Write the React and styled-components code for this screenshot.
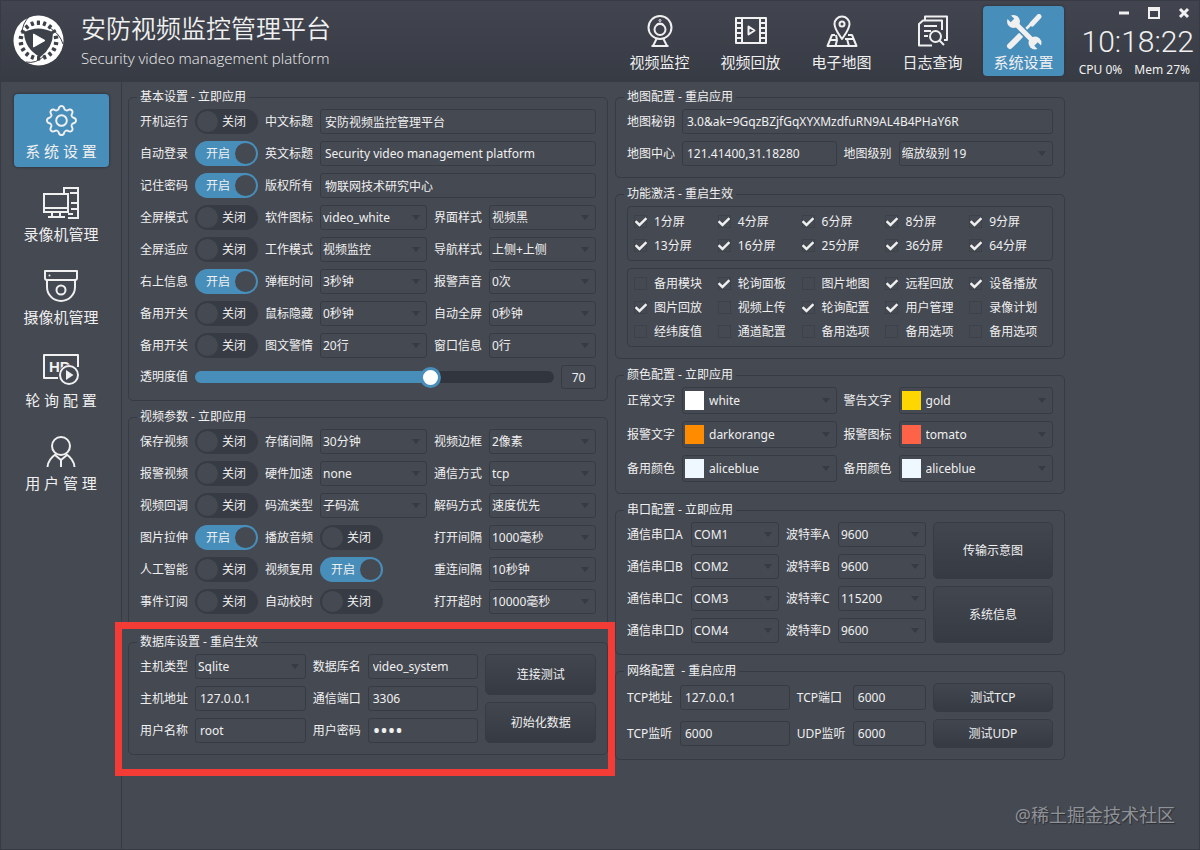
import React, { useId, useState } from "react";
import styled, { createGlobalStyle } from "styled-components";
import { BsGear } from "react-icons/bs";
import { FaCheck } from "react-icons/fa";

const colors = {
  panel: "#454952",
  border: "#373b44",
  dark: "#373b44",
  text: "#f0f0f0",
  blue: "#488eba",
  red: "#f43c36",
};

const GlobalStyle = createGlobalStyle`
  * { box-sizing: border-box; }
  body {
    margin: 0;
    background: ${colors.panel};
    color: ${colors.text};
    font-family: "Noto Sans", "Noto Sans CJK SC", sans-serif;
    font-size: 12px;
    line-height: 16px;
  }
  button, input, select { font: inherit; color: inherit; }
`;

const Window = styled.div`
  min-height: 100vh;
  display: flex;
  flex-direction: column;
  border: 1px solid ${colors.border};
  position: relative;
`;

const Header = styled.header`
  height: 81px;
  display: flex;
  align-items: center;
  padding: 0 5px 2px 12px;
  background: linear-gradient(#42454f, #373b44);
`;

const Brand = styled.div`
  flex: 1;
  display: flex;
  align-items: center;
  gap: 17px;
`;

const Title = styled.h1`
  margin: 0;
  font-size: 25px;
  line-height: 34px;
  font-weight: 350;
`;

const SubTitle = styled.p`
  margin: 0;
  font-family: "Open Sans", "Noto Sans", sans-serif;
  font-weight: 300;
  font-size: 15px;
  line-height: 26px;
`;

const TopNav = styled.nav`
  display: flex;
  gap: 10px;
`;

const NavButton = styled.button`
  display: flex;
  flex-direction: column;
  align-items: center;
  gap: 4px;
  border: none;
  border-radius: 4px;
  background: ${({ $active }) => ($active ? colors.blue : "transparent")};
  box-shadow: ${({ $active }) => ($active ? "0 0 2px 1px #343841" : "none")};
  font-size: 15px;
  line-height: 20px;
  cursor: pointer;
`;

const IconSlot = styled.span`
  height: 34px;
  display: grid;
  place-items: center;
`;

const TopButton = styled(NavButton)`
  width: 81px;
  height: 70px;
  padding: 8px 0 0;
`;

const SideButton = styled(NavButton)`
  width: 95px;
  height: 73px;
  padding: 9px 0 0;
`;

const Status = styled.div`
  width: 119px;
  margin-left: 11px;
  height: 79px;
  display: flex;
  flex-direction: column;
`;

const WindowButtons = styled.div`
  display: flex;
  justify-content: flex-end;
  gap: 10px;
  height: 24px;
`;

const WindowButton = styled.button`
  width: 20px;
  padding: 0;
  border: none;
  background: none;
  display: grid;
  place-items: center;
`;

const Clock = styled.time`
  height: 34px;
  font-family: Roboto, sans-serif;
  font-weight: 300;
  font-size: 30px;
  line-height: 34px;
  text-align: right;
`;

const Usage = styled.div`
  display: flex;
  justify-content: flex-end;
  gap: 12px;
  padding: 3px 4px 0 0;
`;

const Body = styled.div`
  flex: 1;
  display: flex;
`;

const Sidebar = styled.nav`
  width: 121px;
  display: flex;
  flex-direction: column;
  align-items: center;
  gap: 10px;
  padding-top: 12px;
  border-right: 1px solid ${colors.border};
`;

const Main = styled.main`
  flex: 1;
  padding: 7px 6px;
`;

const Panels = styled.div`
  display: grid;
  grid-template-columns: 480fr 450fr;
  gap: 7px;
  max-width: 937px;
`;

const PanelColumn = styled.div`
  display: flex;
  flex-direction: column;
  gap: 8px;
`;

const GroupBox = styled.fieldset`
  margin: 0;
  min-width: 0;
  padding: 4px 8px 11px;
  border: 1px solid ${colors.border};
  border-radius: 5px;
`;

const Legend = styled.legend`
  padding: 0 3px;
  white-space: pre;
`;

const GroupBody = styled.div`
  margin: 0 3px;
  display: flex;
  flex-direction: column;
  gap: 7px;
`;

const FormGrid = styled.div`
  display: grid;
  grid-template-columns: ${({ $columns }) => $columns};
  grid-auto-rows: ${({ $row }) => $row || 25}px;
  align-items: center;
  gap: 7px;
`;

const Label = styled.label`
  white-space: nowrap;
`;

const TextInput = styled.input`
  width: 100%;
  min-width: 0;
  height: 25px;
  padding: 0 4px;
  border: 1px solid ${colors.border};
  border-radius: 3px;
  background: transparent;
  outline: none;
  grid-column: span ${({ $span }) => $span || 1};

  &[type="password"] { font-size: 20px; }
`;

const NumberBox = styled(TextInput)`
  height: 24px;
  padding: 0;
  text-align: center;
`;

const ComboBox = styled.div`
  position: relative;
  min-width: 0;
  height: ${({ $tall }) => ($tall ? 27 : 25)}px;
  display: flex;
  align-items: center;
  border: 1px solid ${colors.border};
  border-radius: 3px;

  &::after {
    content: "";
    position: absolute;
    right: 6px;
    border: 4px solid transparent;
    border-top: 5px solid ${colors.dark};
    border-bottom: none;
    pointer-events: none;
  }
`;

const Select = styled.select`
  flex: 1;
  min-width: 0;
  height: 100%;
  padding: 0 2px;
  border: none;
  background: transparent;
  appearance: none;
  outline: none;
`;

const Swatch = styled.span`
  width: 19px;
  height: 19px;
  margin: 0 3px 0 2px;
  background: ${({ $color }) => $color};
`;

const SwitchTrack = styled.label`
  width: 63px;
  height: 25px;
  padding: 2px;
  display: flex;
  flex-direction: ${({ $on }) => ($on ? "row-reverse" : "row")};
  align-items: center;
  border-radius: 13px;
  background: ${({ $on }) => ($on ? colors.blue : colors.dark)};
`;

const SwitchKnob = styled.input`
  appearance: none;
  width: 21px;
  height: 21px;
  margin: 0;
  border-radius: 50%;
  background: ${colors.panel};
`;

const SwitchText = styled.span`
  padding: 0 5px 0 4px;
`;

const RangeInput = styled.input`
  appearance: none;
  width: 100%;
  height: 12px;
  margin: 0;
  border-radius: 6px;
  background: linear-gradient(
    to right,
    ${colors.blue} ${({ $fill }) => $fill}%,
    #31353e ${({ $fill }) => $fill}%
  );

  &::-webkit-slider-thumb {
    appearance: none;
    width: 21px;
    height: 21px;
    border-radius: 50%;
    border: 3px solid ${colors.blue};
    background: #ffffff;
  }
`;

const CheckPanel = styled.div`
  display: grid;
  grid-template-columns: repeat(5, 1fr);
  gap: 7px;
  padding: 6px;
  border: 1px solid ${colors.border};
  border-radius: 4px;
`;

const CheckLabel = styled.label`
  display: flex;
  align-items: center;
  gap: 7px;
  height: 17px;
  white-space: nowrap;
`;

const CheckMark = styled.span`
  width: 13px;
  display: grid;
  place-items: center;

  > * { grid-area: 1 / 1; }
  svg { pointer-events: none; }
`;

const CheckInput = styled.input`
  appearance: none;
  width: 13px;
  height: 13px;
  margin: 0;
  border: 1px solid #3d414a;
`;

const PushButton = styled.button`
  width: 100%;
  height: 100%;
  padding: 0;
  background: linear-gradient(#42464f, #363a43);
  border: 1px solid ${colors.border};
  border-radius: 5px;
`;

const ButtonStack = styled.div`
  grid-column: 5;
  grid-row: 1 / span ${({ $rows }) => $rows};
  height: 100%;
  display: grid;
  grid-auto-rows: 1fr;
  gap: 7px;
`;

const Marked = styled.div`
  position: relative;

  &::after {
    content: "";
    position: absolute;
    inset: -12px -7px -21px -13px;
    border: 7px solid ${colors.red};
    pointer-events: none;
    z-index: 2;
  }
`;

const Watermark = styled.div`
  position: absolute;
  right: 24px;
  bottom: 21px;
  font-size: 18px;
  line-height: 26px;
  color: #8f9297;
  text-shadow: 1px 1px 1px #2b2e35;
`;

/* icons */

const Icon = ({ width = 32, height = 32, children }) => (
  <svg width={width} height={height} viewBox={`0 0 ${width} ${height}`} fill="none"
    stroke="#f0f0f0" strokeWidth="2" strokeLinejoin="round" aria-hidden="true">
    {children}
  </svg>
);

const Logo = () => {
  const holes = Array.from({ length: 18 }, (_, i) => i * 20);
  return (
    <svg width="51" height="51" viewBox="0 0 51 51" aria-hidden="true">
      <circle cx="25.5" cy="25.5" r="25" fill="#ffffff" />
      {holes.map((angle) => (
        <rect key={angle} x="23.8" y="5.5" width="3.2" height="4.4" rx="0.6" fill="#3d414a"
          transform={`rotate(${angle} 25.5 25.5)`} />
      ))}
      <path d="M12 18 Q25 11 39 18 Q39 32 27 41 Q13 33 12 18Z" fill="#3d414a"
        stroke="#3d414a" strokeWidth="2" strokeLinejoin="round" />
      <path d="M9 19 Q9 8 17 1 M37 13 Q47 19 50 29 M31 41 Q23 49 13 47" fill="none"
        stroke="#3d414a" strokeWidth="1" />
      <path d="M20.500 19 L32 25.500 L20.500 32Z" fill="#ffffff" stroke="#ffffff" strokeLinejoin="round" />
    </svg>
  );
};

const WebcamIcon = () => (
  <Icon>
    <circle cx="16" cy="12.500" r="11.500" />
    <circle cx="16" cy="14.500" r="5.500" />
    <path d="M12.500 10 A5 5 0 0 1 19.500 10" />
    <circle cx="16" cy="5.500" r="1" strokeWidth="1" />
    <path d="M12.500 24 L9 31 M19.500 24 L23 31 M7.500 31 H24.500" />
  </Icon>
);

const FilmIcon = () => (
  <Icon>
    <path d="M1 3 H31 V28 H1Z M7 3 V28 M25 3 V28" />
    <path d="M1 8 H7 M1 13 H7 M1 18 H7 M1 23 H7 M25 8 H31 M25 13 H31 M25 18 H31 M25 23 H31" />
    <path d="M13.500 11.500 L19.500 15.500 L13.500 19.500Z" />
  </Icon>
);

const MapIcon = () => (
  <Icon>
    <path d="M16 24 C12 18 8.500 14 8.500 9 A7.500 7.500 0 0 1 23.500 9 C23.500 14 20 18 16 24Z" />
    <circle cx="16" cy="9" r="2.500" />
    <path d="M9 20 H6 L1.500 31 H30.500 L26 20 H22" />
    <path d="M4 25 H11 L9.500 31 M11 25 L10 20 M19 24 H28 M21 24 L23 31" />
  </Icon>
);

const LogIcon = () => (
  <Icon>
    <path d="M8 5 V1.500 H30 V25 H27" />
    <path d="M15 30.500 H2 V9 L6 5.500 H25 V15" />
    <path d="M7 11 H20 M7 16 H14 M7 21 H11" />
    <circle cx="18.500" cy="21.500" r="5.500" />
    <path d="M22.500 25.500 L27 30" />
  </Icon>
);

const ToolsIcon = () => (
  <Icon width={36} height={36}>
    <path d="M4 32 L14 22" strokeWidth="6" strokeLinecap="round" />
    <path d="M18 17 L27 8" strokeWidth="2.500" />
    <path d="M26 10 L33 2.500" strokeWidth="5" strokeLinecap="round" />
    <path d="M9 9 L28 28" stroke={colors.blue} strokeWidth="8" />
    <path d="M9 9 L28 28" strokeWidth="5" />
    <circle cx="7.500" cy="7.500" r="6.500" fill="#f0f0f0" stroke="none" />
    <circle cx="29" cy="29" r="6.500" fill="#f0f0f0" stroke="none" />
    <path d="M0 0 L6.500 6.500 M30 30 L36 36" stroke={colors.blue} strokeWidth="5" />
  </Icon>
);

const RecorderIcon = () => (
  <Icon width={36}>
    <path d="M1 7 H25 V25 H1Z M1 21 H25 M9 25 V30 M17 25 V30 M5 30 H22" strokeLinejoin="miter" />
    <path d="M21 7 V1 H35 V31 H25" strokeLinejoin="miter" />
    <path d="M27 6 H35 M28 16 H35 M28 22 H35 M25 27 H30" />
  </Icon>
);

const CameraIcon = () => (
  <Icon width={36}>
    <path d="M2 1 H34 V8 Q34 10 32 10 H4 Q2 10 2 8Z" />
    <path d="M4 10 V17 A14 14 0 0 0 32 17 V10" />
    <circle cx="18" cy="20" r="4.500" />
    <circle cx="6.500" cy="5.500" r="1" fill="#f0f0f0" stroke="none" />
  </Icon>
);

const PollingIcon = () => (
  <Icon width={36}>
    <path d="M15 25 H1 V2 H35 V14" />
    <text x="6" y="19" fill="#f0f0f0" stroke="none" fontSize="15" fontWeight="700"
      fontFamily="Liberation Sans, sans-serif">HD</text>
    <circle cx="26" cy="22" r="10.500" fill={colors.panel} stroke="none" />
    <circle cx="26" cy="22" r="9" />
    <path d="M23 17 L30.500 22 L23 27Z" fill="#f0f0f0" stroke="none" />
  </Icon>
);

const UserIcon = () => (
  <Icon>
    <circle cx="16" cy="10" r="9" />
    <path d="M2.500 31 C3 24 8 20 11 18 M29.500 31 C29 24 24 20 21 18 M10 19 L16 24 L22 19 M16 24 V31" />
  </Icon>
);

/* form parts */

const TextField = ({ label, value, span, type = "text" }) => {
  const id = useId();
  return (
    <>
      <Label htmlFor={id}>{label}</Label>
      <TextInput id={id} type={type} defaultValue={value} $span={span} />
    </>
  );
};

const SelectField = ({ label, value, swatch }) => {
  const id = useId();
  return (
    <>
      <Label htmlFor={id}>{label}</Label>
      <ComboBox $tall={swatch}>
        {swatch && <Swatch $color={value} />}
        <Select id={id} defaultValue={value}>
          <option>{value}</option>
        </Select>
      </ComboBox>
    </>
  );
};

const SwitchField = ({ label, on: initial = false }) => {
  const id = useId();
  const [on, setOn] = useState(initial);
  return (
    <>
      <Label htmlFor={id}>{label}</Label>
      <SwitchTrack $on={on}>
        <SwitchKnob id={id} type="checkbox" role="switch" checked={on}
          onChange={() => setOn((prev) => !prev)} />
        <SwitchText>{on ? "开启" : "关闭"}</SwitchText>
      </SwitchTrack>
    </>
  );
};

const CheckField = ({ label, checked: initial }) => {
  const [checked, setChecked] = useState(initial);
  return (
    <CheckLabel>
      <CheckMark>
        <CheckInput type="checkbox" checked={checked} onChange={() => setChecked((prev) => !prev)} />
        {checked && <FaCheck size={12} />}
      </CheckMark>
      {label}
    </CheckLabel>
  );
};

const OpacityField = () => {
  const [value, setValue] = useState(70);
  const min = 10;
  const max = 100;
  return (
    <FormGrid $columns="48px 1fr 35px" $row={24}>
      <Label htmlFor="opacity">透明度值</Label>
      <RangeInput id="opacity" type="range" min={min} max={max} value={value}
        $fill={((value - min) / (max - min)) * 100}
        onChange={(e) => setValue(Number(e.target.value))} />
      <NumberBox aria-label="透明度值" value={value} readOnly />
    </FormGrid>
  );
};

const Group = ({ title, children }) => (
  <GroupBox>
    <Legend>{title}</Legend>
    <GroupBody>{children}</GroupBody>
  </GroupBox>
);

/* data */

const topItems = [
  ["视频监控", WebcamIcon],
  ["视频回放", FilmIcon],
  ["电子地图", MapIcon],
  ["日志查询", LogIcon],
  ["系统设置", ToolsIcon],
];

const sideItems = [
  ["系 统 设 置", () => <BsGear size={31} />],
  ["录像机管理", RecorderIcon],
  ["摄像机管理", CameraIcon],
  ["轮 询 配 置", PollingIcon],
  ["用 户 管 理", UserIcon],
];

const basicRows = [
  ["全屏模式", false, "软件图标", "video_white", "界面样式", "视频黑"],
  ["全屏适应", false, "工作模式", "视频监控", "导航样式", "上侧+上侧"],
  ["右上信息", true, "弹框时间", "3秒钟", "报警声音", "0次"],
  ["备用开关", false, "鼠标隐藏", "0秒钟", "自动全屏", "0秒钟"],
  ["备用开关", false, "图文警情", "20行", "窗口信息", "0行"],
];

// a boolean in the fourth place is a switch, text is a drop-down
const videoRows = [
  ["保存视频", false, "存储间隔", "30分钟", "视频边框", "2像素"],
  ["报警视频", false, "硬件加速", "none", "通信方式", "tcp"],
  ["视频回调", false, "码流类型", "子码流", "解码方式", "速度优先"],
  ["图片拉伸", true, "播放音频", false, "打开间隔", "1000毫秒"],
  ["人工智能", false, "视频复用", true, "重连间隔", "10秒钟"],
  ["事件订阅", false, "自动校时", false, "打开超时", "10000毫秒"],
];

const screenChecks = ["1", "4", "6", "8", "9", "13", "16", "25", "36", "64"];

const moduleChecks = [
  ["备用模块", false], ["轮询面板", true], ["图片地图", false], ["远程回放", true], ["设备播放", true],
  ["图片回放", true], ["视频上传", false], ["轮询配置", true], ["用户管理", true], ["录像计划", false],
  ["经纬度值", false], ["通道配置", false], ["备用选项", false], ["备用选项", false], ["备用选项", false],
];

const colorFields = [
  ["正常文字", "white"], ["警告文字", "gold"],
  ["报警文字", "darkorange"], ["报警图标", "tomato"],
  ["备用颜色", "aliceblue"], ["备用颜色", "aliceblue"],
];

const serialRows = [
  ["A", "COM1", "9600"],
  ["B", "COM2", "9600"],
  ["C", "COM3", "115200"],
  ["D", "COM4", "9600"],
];

const SettingRows = ({ rows }) =>
  rows.map(([name, on, label, value, label2, value2], i) => (
    <React.Fragment key={i}>
      <SwitchField label={name} on={on} />
      {typeof value === "boolean"
        ? <SwitchField label={label} on={value} />
        : <SelectField label={label} value={value} />}
      <SelectField label={label2} value={value2} />
    </React.Fragment>
  ));

const settingColumns = "48px 63px 48px 1fr 48px 1fr";

export default function App() {
  const [page, setPage] = useState("系统设置");
  const [section, setSection] = useState(sideItems[0][0]);

  return (
    <Window>
      <GlobalStyle />
      <Header>
        <Brand>
          <Logo />
          <div>
            <Title>安防视频监控管理平台</Title>
            <SubTitle>Security video management platform</SubTitle>
          </div>
        </Brand>
        <TopNav>
          {topItems.map(([name, NavIcon]) => (
            <TopButton key={name} $active={page === name} onClick={() => setPage(name)}>
              <IconSlot><NavIcon /></IconSlot>
              {name}
            </TopButton>
          ))}
        </TopNav>
        <Status>
          <WindowButtons>
            <WindowButton aria-label="最小化">
              <svg width="12" height="12"><path d="M1 6 H11" stroke="#f0f0f0" strokeWidth="3" /></svg>
            </WindowButton>
            <WindowButton aria-label="最大化">
              <svg width="12" height="12" fill="none" stroke="#f0f0f0">
                <path d="M1 1 H11 V11 H1Z" strokeWidth="2" /><path d="M0 2 H12" strokeWidth="4" />
              </svg>
            </WindowButton>
            <WindowButton aria-label="关闭">
              <svg width="12" height="12"><path d="M2 2 L10 10 M10 2 L2 10" stroke="#f0f0f0" strokeWidth="3" /></svg>
            </WindowButton>
          </WindowButtons>
          <Clock>10:18:22</Clock>
          <Usage>
            <span>CPU 0%</span>
            <span>Mem 27%</span>
          </Usage>
        </Status>
      </Header>
      <Body>
        <Sidebar>
          {sideItems.map(([name, NavIcon]) => (
            <SideButton key={name} $active={section === name} onClick={() => setSection(name)}>
              <IconSlot><NavIcon /></IconSlot>
              {name}
            </SideButton>
          ))}
        </Sidebar>
        <Main>
          <Panels>
            <PanelColumn>
              <Group title="基本设置 - 立即应用">
                <FormGrid $columns={settingColumns}>
                  <SwitchField label="开机运行" />
                  <TextField label="中文标题" value="安防视频监控管理平台" span={3} />
                  <SwitchField label="自动登录" on />
                  <TextField label="英文标题" value="Security video management platform" span={3} />
                  <SwitchField label="记住密码" on />
                  <TextField label="版权所有" value="物联网技术研究中心" span={3} />
                  <SettingRows rows={basicRows} />
                </FormGrid>
                <OpacityField />
              </Group>
              <Group title="视频参数 - 立即应用">
                <FormGrid $columns={settingColumns}>
                  <SettingRows rows={videoRows} />
                </FormGrid>
              </Group>
              <Marked>
                <Group title="数据库设置 - 重启生效">
                  <FormGrid $columns="48px 1fr 48px 1fr 1fr">
                    <SelectField label="主机类型" value="Sqlite" />
                    <TextField label="数据库名" value="video_system" />
                    <ButtonStack $rows={3}>
                      <PushButton>连接测试</PushButton>
                      <PushButton>初始化数据</PushButton>
                    </ButtonStack>
                    <TextField label="主机地址" value="127.0.0.1" />
                    <TextField label="通信端口" value="3306" />
                    <TextField label="用户名称" value="root" />
                    <TextField label="用户密码" value="root" type="password" />
                  </FormGrid>
                </Group>
              </Marked>
            </PanelColumn>
            <PanelColumn>
              <Group title="地图配置 - 重启应用">
                <FormGrid $columns="48px 1fr 48px 1fr">
                  <TextField label="地图秘钥" value="3.0&ak=9GqzBZjfGqXYXMzdfuRN9AL4B4PHaY6R" span={3} />
                  <TextField label="地图中心" value="121.41400,31.18280" />
                  <SelectField label="地图级别" value="缩放级别 19" />
                </FormGrid>
              </Group>
              <Group title="功能激活 - 重启生效">
                <CheckPanel>
                  {screenChecks.map((n) => <CheckField key={n} label={`${n}分屏`} checked />)}
                </CheckPanel>
                <CheckPanel>
                  {moduleChecks.map(([label, checked], i) => (
                    <CheckField key={i} label={label} checked={checked} />
                  ))}
                </CheckPanel>
              </Group>
              <Group title="颜色配置 - 立即应用">
                <FormGrid $columns="48px 1fr 48px 1fr" $row={27}>
                  {colorFields.map(([label, value], i) => (
                    <SelectField key={i} label={label} value={value} swatch />
                  ))}
                </FormGrid>
              </Group>
              <Group title="串口配置 - 立即应用">
                <FormGrid $columns="57px 1fr 45px 1fr 120px">
                  {serialRows.map(([port, com, baud]) => (
                    <React.Fragment key={port}>
                      <SelectField label={`通信串口${port}`} value={com} />
                      <SelectField label={`波特率${port}`} value={baud} />
                    </React.Fragment>
                  ))}
                  <ButtonStack $rows={4}>
                    <PushButton>传输示意图</PushButton>
                    <PushButton>系统信息</PushButton>
                  </ButtonStack>
                </FormGrid>
              </Group>
              <Group title="网络配置  - 重启应用">
                <FormGrid $columns="46px 3fr 49px 2fr 120px" $row={29}>
                  <TextField label="TCP地址" value="127.0.0.1" />
                  <TextField label="TCP端口" value="6000" />
                  <PushButton>测试TCP</PushButton>
                  <TextField label="TCP监听" value="6000" />
                  <TextField label="UDP监听" value="6000" />
                  <PushButton>测试UDP</PushButton>
                </FormGrid>
              </Group>
            </PanelColumn>
          </Panels>
        </Main>
      </Body>
      <Watermark>@稀土掘金技术社区</Watermark>
    </Window>
  );
}
